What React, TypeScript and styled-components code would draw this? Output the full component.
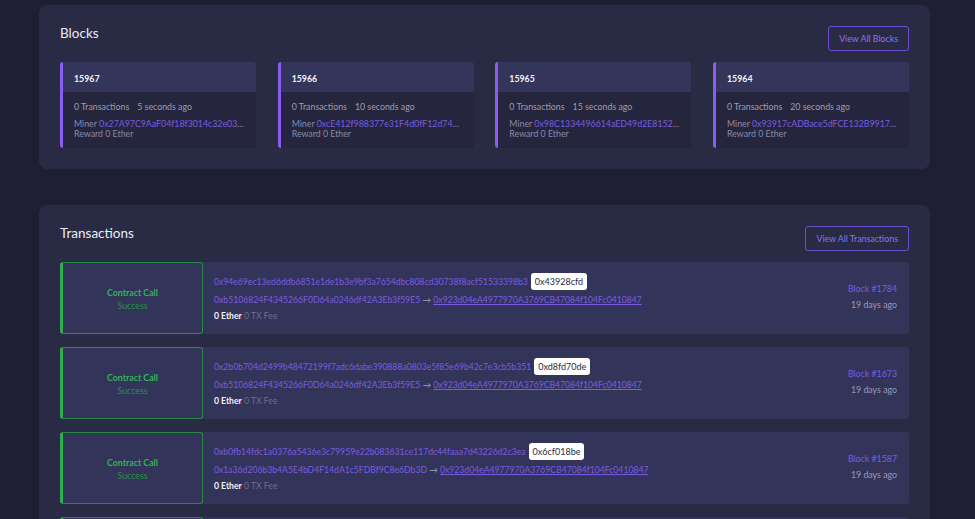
import React from "react";
import styled, { createGlobalStyle } from "styled-components";

const Global = createGlobalStyle`
  html, body { margin: 0; padding: 0; background: #1e1f33; }
  body { font-family: Lato, "Noto Sans", sans-serif; color: #c9c9dc; }
  * { box-sizing: border-box; }
`;

const Page = styled.div`
  width: 975px;
  height: 519px;
  overflow: hidden;
  padding: 5px 45px 0 39px;
  display: flex;
  flex-direction: column;
  gap: 36px;
`;

const Panel = styled.section`
  width: 891px;
  background: #292a44;
  border-radius: 8px;
  padding: 21px;
  display: flex;
  flex-direction: column;
`;

const HeaderRow = styled.div<{ $gap: number }>`
  display: flex;
  justify-content: space-between;
  align-items: flex-start;
  height: 25px;
  margin-bottom: ${(p) => p.$gap}px;
`;

const Title = styled.h2<{ $top: number }>`
  margin: 0;
  font-size: 13.5px;
  font-weight: 400;
  color: #eceaf6;
  line-height: 14px;
  padding-top: ${(p) => p.$top}px;
`;

const OutlineButton = styled.button`
  font-family: inherit;
  background: transparent;
  border: 1px solid #6a4fd0;
  border-radius: 3px;
  color: #8f72ee;
  font-size: 8.8px;
  height: 25px;
  padding: 0 10px;
  cursor: pointer;
`;

const BlockGrid = styled.div`
  display: grid;
  grid-template-columns: repeat(4, 196px);
  justify-content: space-between;
`;

const BlockCard = styled.div`
  border-left: 3px solid #8a5cf2;
  border-radius: 3px;
  overflow: hidden;
  height: 86px;
  display: flex;
  flex-direction: column;
`;

const BlockHead = styled.div`
  height: 30px;
  background: #34355a;
  display: flex;
  align-items: center;
  padding: 2px 0 0 11px;
  font-size: 8.8px;
  font-weight: 700;
  color: #f2f2fa;
`;

const BlockBody = styled.div`
  flex: 1;
  background: #25263d;
  padding: 9px 11px 0 11px;
  font-size: 8.8px;
  color: #9c9cb6;
`;

const MetaLine = styled.div`
  display: flex;
  gap: 8px;
  line-height: 12px;
  margin-bottom: 6px;
`;

const SmallLine = styled.div`
  line-height: 10px;
  height: 10px;
  white-space: nowrap;
  overflow: hidden;
  text-overflow: ellipsis;
  color: #8a8aa6;
`;

const Link = styled.span<{ $underline?: boolean }>`
  color: #7a5ce0;
  text-decoration: ${(p) => (p.$underline ? "underline" : "none")};
`;

const TxList = styled.div`
  display: flex;
  flex-direction: column;
  gap: 13px;
`;

const TxRow = styled.div`
  display: flex;
  height: 72px;
  background: #33345a;
  border-radius: 3px;
  flex-shrink: 0;
`;

const StatusBox = styled.div`
  width: 143px;
  border: 1px solid #2c8a47;
  border-left: 3px solid #2fae50;
  border-radius: 3px;
  display: flex;
  flex-direction: column;
  align-items: center;
  justify-content: center;
  padding-top: 2px;
  font-size: 8.8px;
  line-height: 13px;
`;

const StatusType = styled.div`
  color: #35b157;
  font-weight: 700;
`;

const StatusText = styled.div`
  color: #2e8f4e;
`;

const TxInfo = styled.div`
  flex: 1;
  padding: 11px 0 0 11px;
  font-size: 8.65px;
  display: flex;
  flex-direction: column;
`;

const HashLine = styled.div`
  display: flex;
  align-items: center;
  gap: 3px;
  height: 17px;
  margin-bottom: 4px;
`;

const Badge = styled.span`
  background: #ffffff;
  color: #2a2a3a;
  border-radius: 3px;
  padding: 0 4px;
  height: 17px;
  display: inline-flex;
  align-items: center;
  font-size: 9px;
`;

const AddrLine = styled.div`
  line-height: 12px;
  color: #7a5ce0;
  margin-bottom: 4px;
`;

const Arrow = styled.span`
  color: #a0a0b8;
`;

const FeeLine = styled.div`
  line-height: 12px;
  color: #6f6f8c;
`;

const Ether = styled.span`
  color: #f0f0f8;
  font-weight: 700;
`;

const TxRight = styled.div`
  padding: 21px 12px 0 0;
  display: flex;
  flex-direction: column;
  align-items: flex-end;
  gap: 4px;
  font-size: 8.8px;
  line-height: 12px;
`;

const Ago = styled.div`
  color: #9a9ab4;
`;

const blocks = [
  { n: "15967", ago: "5 seconds ago", miner: "0x27A97C9AaF04f18f3014c32e03b5F10C57c0E1B2" },
  { n: "15966", ago: "10 seconds ago", miner: "0xcE412f988377e31F4d0fF12d74df8C0a2A5B61E4" },
  { n: "15965", ago: "15 seconds ago", miner: "0x98C1334496614aED49d2E8152cF1D0A7b3e4a291" },
  { n: "15964", ago: "20 seconds ago", miner: "0x93917cADBace5dFCE132B99173a4E0cB8d52F017" },
];

const txs = [
  {
    hash: "0x94e69ec13ed6ddb6851e1de1b3e9bf3a7654dbc808cd30738f8acf51533398b3",
    method: "0x43928cfd",
    from: "0xb5106824F4345266F0D64a0246df42A3Eb3f59E5",
    block: "1784",
  },
  {
    hash: "0x2b0b704d2499b48472199f7adc6dabe390888a0803e5f85e69b42c7e3cb5b351",
    method: "0xd8fd70de",
    from: "0xb5106824F4345266F0D64a0246df42A3Eb3f59E5",
    block: "1673",
  },
  {
    hash: "0xb0fb14fdc1a0376a5436e3c79959e22b083631ce117dc44faaa7d43226d2c3ea",
    method: "0x6cf018be",
    from: "0x1a36d206b3b4A5E4bD4F14dA1c5FDBf9C8e6Db3D",
    block: "1587",
  },
  {
    hash: "0x5c2e8f14a9b3d07e6a1c4f92b8d3e57a0c6f1b24d9e83a7c5b0f2d61e4a89c37",
    method: "0x43928cfd",
    from: "0xb5106824F4345266F0D64a0246df42A3Eb3f59E5",
    block: "1502",
  },
];

const TO = "0x923d04eA4977970A3769CB47084f104Fc0410847";

export default function App() {
  return (
    <>
      <Global />
      <Page>
        <Panel>
          <HeaderRow $gap={11}>
            <Title $top={0}>Blocks</Title>
            <OutlineButton>View All Blocks</OutlineButton>
          </HeaderRow>
          <BlockGrid>
            {blocks.map((b) => (
              <BlockCard key={b.n}>
                <BlockHead>{b.n}</BlockHead>
                <BlockBody>
                  <MetaLine>
                    <span>0 Transactions</span>
                    <span>{b.ago}</span>
                  </MetaLine>
                  <SmallLine>
                    Miner <Link>{b.miner}</Link>
                  </SmallLine>
                  <SmallLine>Reward 0 Ether</SmallLine>
                </BlockBody>
              </BlockCard>
            ))}
          </BlockGrid>
        </Panel>
        <Panel>
          <HeaderRow $gap={11}>
            <Title $top={0}>Transactions</Title>
            <OutlineButton>View All Transactions</OutlineButton>
          </HeaderRow>
          <TxList>
            {txs.map((t) => (
              <TxRow key={t.hash}>
                <StatusBox>
                  <StatusType>Contract Call</StatusType>
                  <StatusText>Success</StatusText>
                </StatusBox>
                <TxInfo>
                  <HashLine>
                    <Link>{t.hash}</Link>
                    <Badge>{t.method}</Badge>
                  </HashLine>
                  <AddrLine>
                    {t.from} <Arrow>→</Arrow> <Link $underline>{TO}</Link>
                  </AddrLine>
                  <FeeLine>
                    <Ether>0 Ether</Ether> 0 TX Fee
                  </FeeLine>
                </TxInfo>
                <TxRight>
                  <Link>Block #{t.block}</Link>
                  <Ago>19 days ago</Ago>
                </TxRight>
              </TxRow>
            ))}
          </TxList>
        </Panel>
      </Page>
    </>
  );
}
